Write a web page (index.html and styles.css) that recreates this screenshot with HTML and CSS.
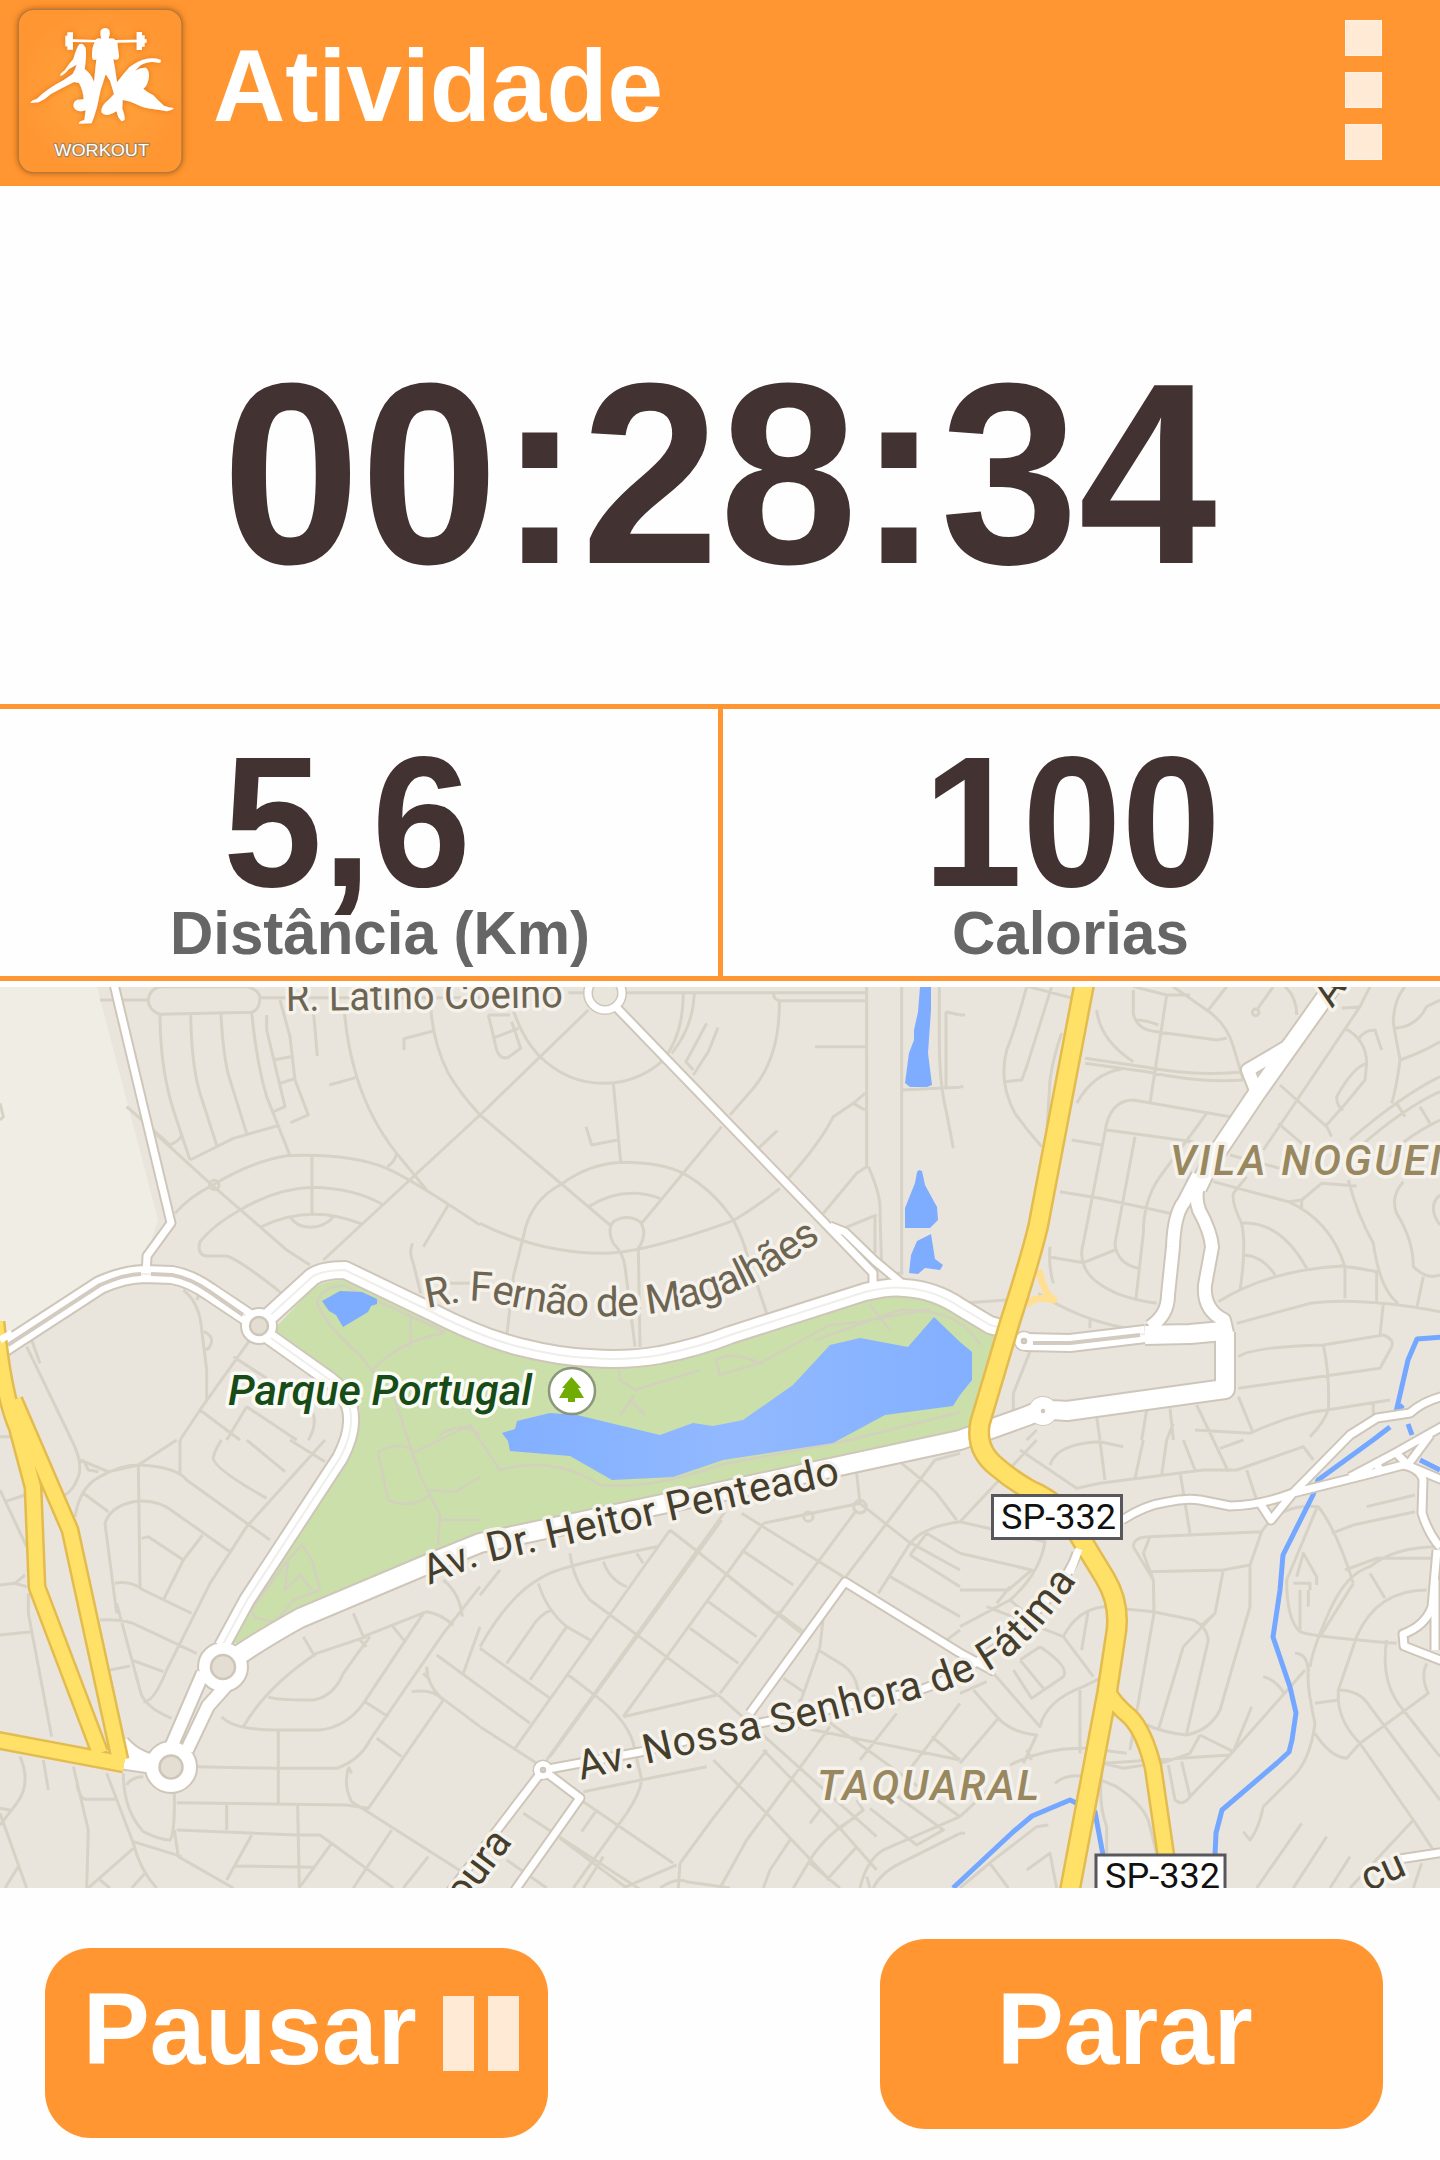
FILE: index.html
```html
<!DOCTYPE html>
<html lang="pt-BR">
<head>
<meta charset="utf-8">
<title>Atividade</title>
<link rel="stylesheet" href="styles.css">
</head>
<body>
<header class="topbar">
  <svg class="logo" viewBox="0 0 600 558" aria-label="Workout">
    <defs>
      <radialGradient id="glow"><stop offset="0" stop-color="#ffa63f"/><stop offset="1" stop-color="#ff9632"/></radialGradient>
      <filter id="soft" x="-20%" y="-20%" width="140%" height="140%"><feDropShadow dx="0" dy="0" stdDeviation="10" flood-color="#a84e00" flood-opacity=".75"/></filter>
      <filter id="halo" x="-20%" y="-20%" width="140%" height="140%"><feDropShadow dx="0" dy="0" stdDeviation="9" flood-color="#e06c00" flood-opacity=".8"/></filter>
    </defs>
    <rect x="55" y="28" width="491" height="490" rx="46" fill="url(#glow)" stroke="#b27a3d" stroke-width="4" filter="url(#soft)"/>
    <g fill="#fff" filter="url(#halo)">
      <path d="M196 107H202V97H219V118L286 120Q292 112 304 116Q299 100 303 90Q315 78 328 90Q332 102 326 116Q340 112 346 120L410 119V96H426V106H434V118H440V128H434V140H426V150H410V127L352 128L357 168Q358 182 340 178L345 205L351 247Q370 222 388 202Q412 182 440 176Q462 172 482 179Q485 190 474 188Q445 181 420 197L405 213Q420 202 438 203Q450 213 446 236Q441 260 430 266Q443 278 460 286Q474 302 492 317Q506 323 521 324Q520 330 500 334Q478 330 462 328Q430 325 409 313Q390 302 368 300L367 326Q375 346 374 360L365 364Q352 352 350 334L338 340Q315 351 304 337Q302 318 325 300Q337 288 342 282L330 242L317 223L302 270L291 322Q283 350 275 370L236 371Q237 364 253 360L257 331Q232 340 221 321Q218 305 232 299L251 298Q249 270 237 249L222 246Q182 266 153 282Q136 298 116 307L91 309Q94 300 110 297Q140 267 190 241L218 222Q226 208 230 194L207 207Q192 225 181 228Q178 222 195 210Q208 190 220 177Q230 142 238 133Q248 126 257 144Q260 170 254 207Q276 224 282 246Q286 207 289 178Q276 184 276 169Q275 143 284 127L219 126V149H202V139H196Z"/>
    </g>
    <text class="logo-text" x="163" y="469" textLength="284" lengthAdjust="spacingAndGlyphs">WORKOUT</text>
  </svg>
  <h1 class="title">Atividade</h1>
  <div class="menu"><i></i><i></i><i></i></div>
</header>

<main>
  <section class="timer"><span>00:28:34</span></section>

  <section class="stats">
    <div class="stat stat-distance"><strong>5,6</strong><span>Distância (Km)</span></div>
    <div class="stat stat-calories"><strong>100</strong><span>Calorias</span></div>
  </section>

  <svg class="map" viewBox="0 987 1440 901">
    <defs>
      <linearGradient id="lake" x1="0" x2="1"><stop offset="0" stop-color="#82afff"/><stop offset=".5" stop-color="#92b9ff"/><stop offset="1" stop-color="#82afff"/></linearGradient>
      <path id="fernao" d="M427 1308L466 1301Q482 1300 500 1304Q540 1313 580 1316Q630 1318 677 1310Q735 1296 775 1271L830 1234"/>
      <path id="heitor" d="M429 1585L480 1565Q495 1560 552 1548L675 1520L870 1477"/>
      <path id="nossa" d="M581 1780L650 1763L760 1738L920 1698Q970 1684 1000 1664Q1042 1636 1097 1550"/>

      <path id="w-thin" d="M113 980L171 1223L147 1256L146 1276M617 1008L873 1273V1292M830 1226L845 1232L875 1261L905 1286M1077 1553Q1065 1590 1000 1645Q950 1685 900 1695L750 1725L640 1752L543 1770L440 1905M543 1770L580 1798L508 1900M750 1713L845 1582L960 1653L995 1672"/>
      <path id="w-right" d="M1122 1520Q1145 1505 1167 1502Q1185 1498 1200 1500L1230 1506Q1262 1505 1293 1493L1373 1473L1403 1465Q1420 1468 1423 1480L1422 1513Q1428 1533 1440 1547M1293 1493L1350 1435L1377 1418L1410 1413Q1425 1400 1445 1396M1260 1503L1271 1520L1293 1493M1350 1477L1397 1452L1445 1425M1375 1460L1382 1474M1395 1452L1409 1466L1445 1481M1410 1462L1430 1435M1437 1550L1432 1607Q1425 1626 1403 1634L1404 1646L1445 1662M1393 1860L1445 1852M1435 1580V1650"/>
      <path id="w-dbl" d="M0 1350L100 1285Q125 1274 145 1274L172 1275Q190 1278 210 1292L255 1322M265 1320L312 1277Q322 1270 345 1270L430 1311Q480 1337 520 1347Q560 1357 590 1358Q625 1361 660 1355Q700 1347 730 1335L865 1292Q890 1286 905 1288Q935 1290 960 1307L990 1325L1012 1331M1025 1342L1070 1343L1145 1334"/>
      <path id="w-south" d="M268 1336L330 1380Q351 1397 351 1418Q352 1435 340 1458L247 1600L222 1646"/>
      <path id="w-wide" d="M223 1666Q255 1643 300 1618L433 1562L480 1543L700 1496L960 1440L1027 1416Q1042 1408 1067 1411L1225 1389V1332M1145 1335L1190 1334L1223 1331"/>
      <path id="w-mid" d="M1227 1333L1224 1320Q1203 1310 1205 1285L1212 1247Q1211 1232 1199 1210Q1194 1195 1199 1185M1150 1327Q1168 1315 1168 1295L1173 1247Q1174 1215 1184 1202L1198 1175M1257 1093L1248 1070L1287 1047L1310 1018M122 1742Q138 1762 171 1764M120 1762L160 1768M172 1745L203 1673M187 1750L208 1706L233 1678"/>
      <path id="w-up" d="M1198 1188L1210 1163L1257 1093L1323 1000L1340 975"/>
      <path id="y-main" d="M1085 980L1038 1227Q1030 1260 1010 1322L980 1423Q975 1450 997 1467Q1012 1480 1030 1490Q1065 1505 1080 1537L1105 1578Q1122 1606 1115 1640L1107 1693L1069 1895"/>
      <path id="y-side" d="M1107 1690Q1113 1703 1130 1717Q1144 1731 1153 1767L1166 1856M-4 1322Q3 1395 17 1427L33 1487L37 1587L100 1753M14 1400L70 1530L120 1760M-3 1740L124 1764"/>
    </defs>
    <rect class="land" y="987" width="1440" height="901"/>
    <path class="pale" d="M0 987H97L158 1220L148 1250L140 1266Q112 1270 95 1280L0 1340Z"/>

    <!-- local streets, one group per map tile -->
    <g class="street" transform="translate(0 980) scale(.33333)">
      <path d="M300 60H445M480 103Q445 90 445 60Q450 20 490 20H740Q780 30 780 55Q778 90 755 97ZM780 53H1440M480 103Q480 280 530 420L570 540M572 103Q575 260 600 340L650 495M663 103Q670 240 690 300L740 460M755 97Q770 250 800 350L870 527M800 105V150L855 380L820 395M840 60L870 170L885 300L925 405L872 428M820 240L872 230M840 310L885 295M940 90L952 228M1033 90Q1040 190 1070 290Q1110 420 1190 520L1280 630Q1240 610 1230 600M988 315L1070 292M1293 90Q1300 190 1345 280Q1380 340 1440 405L970 840M1212 210V176L1300 153M380 380L510 495Q545 480 545 460M460 455L630 610L860 810L930 855M570 540L700 475L830 438M1190 520Q1185 545 1162 560M525 700Q570 650 630 620Q750 545 860 527Q1050 520 1160 565Q1230 595 1440 735M720 690Q830 625 940 622Q1060 625 1145 672M936 527V705M785 740Q930 670 1085 732M870 710Q890 742 930 742Q975 742 1000 710M720 690Q640 735 600 785Q590 825 620 828H680Q720 840 845 940M1345 675L1270 800M1238 790Q1225 815 1240 850L1262 940M0 370L10 410L0 420M550 930Q600 970 605 1050L620 1170V1260M590 960L600 940M612 1055Q635 1065 635 1083Q632 1108 612 1110M750 1080L600 1290L540 1380M700 1130L800 1195M600 1290L720 1380M740 1280L680 1380M740 1280L890 1380M940 1300Q950 1340 925 1380M80 1100L215 1380M95 1080L120 1150M0 1370H30M1330 910H1440"/>
      <circle cx="643" cy="615" r="14"/>
    </g>
    <g class="street" transform="translate(480 980) scale(.33333)">
      <path d="M265 38H310M430 38H1160M880 38Q880 60 900 62H1155M25 105L50 210Q60 240 85 232L122 205L95 125M45 172L115 145M25 105H90M100 90Q125 170 175 225Q260 310 370 310Q470 310 545 245Q610 170 610 38M0 405L325 90M575 220Q640 140 643 38M680 130L618 245L640 270M714 143L685 215L640 285M898 62Q900 230 820 325L750 405M1005 200H1158M1160 20V560L1130 580L1030 700M1265 20V880M1378 20V200Q1380 320 1400 400L1420 505M1398 95V320M1398 95L1440 105M1265 330L1440 322M1155 340L1120 370L1060 410Q1020 490 925 595M1120 370L1155 390M835 505L892 452M400 310L422 545M318 440L335 495L412 480M725 440L485 730M540 655Q430 615 325 680M0 405L390 735M130 770Q150 660 245 612Q330 550 430 547Q540 547 610 580Q700 630 760 720Q790 780 800 820L860 1000M0 730Q180 820 370 820Q490 820 760 722Q830 680 900 625M130 770L100 890L80 1070M400 790Q380 750 400 725Q440 700 480 725Q505 760 475 805L480 1100M400 790Q430 820 435 860L465 1100M1165 560Q1205 650 1200 700L1205 860M1185 710V820M1090 745L1190 705M1175 825L1215 850M1245 880L1270 880"/>
    </g>
    <g class="street" transform="translate(960 980) scale(.33333)">
      <path d="M205 20L340 55M200 20Q165 150 140 210Q115 310 165 400Q200 450 245 500M275 20L200 260L185 300L135 305M305 160Q280 230 270 300L258 500M410 90Q420 180 520 245M375 235L560 262Q700 290 860 275M375 250L560 275Q720 310 850 300M520 30V100Q530 150 590 155L770 180L800 175M525 120Q560 120 595 135M640 20L740 90Q800 130 820 200L850 300M620 45L570 370M520 20L620 45L690 45M800 20L745 90M940 20L890 90M975 20Q1010 50 1010 105M350 370Q400 280 485 267M370 850Q360 820 370 790L440 430Q460 360 520 360L810 410M440 450L700 485M335 480L425 495M525 470L465 790Q470 850 535 865M740 400L600 590Q550 660 550 760L528 955M300 635L420 655L630 700M265 830L370 848L465 810M370 848Q380 900 470 940Q520 960 590 970M235 940Q360 1020 500 1045M390 1020V1045M270 800Q265 860 280 910M0 105H15M0 320H10M0 970L140 960M1145 85L1200 80L1230 20M1200 80L910 510M960 315L1100 440L1115 470M955 430L1060 520M1155 145Q1220 180 1220 250L1215 300Q1160 370 1095 440M1195 180Q1210 150 1245 150L1265 210M1220 250Q1180 260 1130 350Q1130 380 1150 390M1335 20Q1300 60 1300 130L1320 240Q1310 320 1295 370M1305 145Q1370 140 1400 80L1440 60M1320 240Q1390 215 1440 185M1440 290Q1320 350 1170 480M1440 335Q1330 385 1200 500M1440 420Q1320 480 1290 530M1380 380L1410 430M1310 370L1335 410M810 525L960 565M760 605Q870 635 985 665Q1110 720 1155 860V955M985 665L1025 660L1085 610L1190 618M1025 660V690M860 590L820 640Q815 670 845 730Q860 800 840 930M840 730Q960 720 1040 865M855 825Q910 830 945 885M775 965Q930 870 1145 858Q1250 870 1250 880V965M1165 600Q1190 700 1240 790Q1260 930 1315 970M1145 858L1255 875M1330 605Q1290 650 1310 700Q1360 780 1360 860Q1400 900 1440 885M1440 645Q1400 680 1440 735M1390 890L1370 985M830 1030L1050 970Q1200 950 1440 995M1270 970L1260 1065M835 1130Q880 1100 1090 1095L1270 1065Q1310 1080 1290 1110L1260 1165L835 1225M1090 1095Q1110 1190 1105 1290Q1090 1330 1050 1370M880 1360L835 1250M710 1275L760 1380M705 1350L870 1360Q1000 1300 1100 1290L1290 1260M1240 1265V1310M210 1115L160 1240V1300M560 1290L545 1380M630 1285L640 1380M410 1310L420 1380M640 1330L620 1380M230 1350L200 1380"/>
      <circle cx="887" cy="97" r="10"/>
    </g>
    <g class="street" transform="translate(0 1440) scale(.33333)">
      <path d="M0 150L80 320M15 185L75 165M0 435L45 430L80 440M45 430L75 405M85 460V520L155 890M0 585L95 575M215 0Q250 70 235 110Q220 150 195 165M240 60L325 95L415 75L530 0M250 60L265 90L295 95M540 0V105M225 230Q240 140 300 110Q360 75 415 75Q530 80 560 120L810 300M415 75L420 440M250 160L325 215M350 520L315 250Q330 200 400 185Q470 175 520 215L690 335M425 295L445 290L550 360L490 480M550 360L608 285M345 430Q390 420 430 450L575 520M300 540Q380 535 420 560L590 640M350 490L420 750Q430 800 515 835M330 690L390 678M395 660L490 695M975 0L740 260L630 430L500 690Q460 790 430 785M640 50Q650 20 665 0M640 50Q630 80 800 175M740 0L855 95M870 0L975 65M60 950Q95 1030 50 1090L0 1155M130 960L145 1050M0 1105L30 1110M0 1120L80 1344M220 980L265 1170L260 1344M230 1030Q240 1080 260 1078H345M320 1000L400 1210Q420 1290 470 1344M370 1000Q370 1110 430 1175Q480 1200 510 1200Q525 1180 523 1060M380 1035Q395 1010 430 1010M523 1170L535 1250L700 1344M400 1205L545 1250M400 1225L265 1344M435 1300L395 1344M300 1320L330 1344M55 1280L15 1344M590 980L830 985H1010Q1080 960 1110 900L1330 580L1440 440M530 1088L1040 1095L1105 1105L1330 780M530 1170L890 1185H960L1180 1344M835 870V1090M680 1090V1170M893 1095L898 1344M705 1278L940 1282M755 1185L680 1320M995 1210L900 1340M665 830Q700 870 835 870H960Q1040 860 1090 790L1270 520M730 860Q800 740 950 640L1100 590M805 770Q820 780 940 780Q1000 770 1030 700Q1080 630 1110 590M1060 520L1090 590L1280 515Q1320 520 1360 555M910 590L945 650M1330 420Q1380 460 1387 530M1175 555L1215 605M1080 600L1100 620M1440 560L1390 700M1310 645L1440 740M1280 680Q1280 730 1320 770L1440 860M1235 755Q1300 745 1330 780M1270 700L1290 720M1095 785L1165 830M1130 895L1205 950M1045 985Q1030 1040 1055 1085L1110 1120L1440 1330M1175 1170L1060 1344M1285 1250L1210 1344M1045 980L1055 1000"/>
    </g>
    <g class="street" transform="translate(480 1440) scale(.33333)">
      <path d="M0 465L60 390M0 620Q90 460 190 410Q230 380 530 320M270 340Q280 420 330 480L720 770L1190 1190M370 365Q390 420 440 440M470 340L490 370M175 430Q200 510 260 560L330 600M215 510Q180 520 150 570L80 670M260 560L150 720M570 270L105 925M735 215L200 960M725 240L210 950M570 270L965 580M785 220L1090 410M850 250L430 830M850 250L1140 190M785 330L940 435M735 400L885 520M685 485L830 590M630 565L775 670M1130 210L720 760M890 515L970 575M0 625L210 775M0 740L150 850M0 860L170 970M265 705L350 770Q440 840 460 910L485 1020M430 830L710 765M310 1055L680 980M485 1020Q480 1060 440 1120L280 1344M580 1270L310 1085M860 930L695 1140L600 1270M1050 860L800 1200L720 1344M700 960L870 1130L1040 1310M850 930L1080 1165L1190 1290M955 860L1440 960M910 715L970 755M1030 530L1020 620L960 790M1015 630L1080 670Q1130 700 1135 760M1130 100L1140 190L1285 305L1440 390M1090 420L1365 60L1440 40M1265 70Q1340 130 1370 160L1430 240M1195 460L1290 310Q1330 260 1440 245M1290 345L1440 440M1230 410L1440 530M1340 280L1440 340M1340 280L1290 345M1250 820L1140 960M1440 790L1280 1000M1355 890L1440 960M955 780L1440 1130M130 1120L590 1420M350 1110L305 1175M600 1270L595 1344M590 1275L430 1344M540 1344Q590 1310 620 1325L750 1344M370 1250L310 1344M1240 1060L1390 1170L1310 1215L1170 1105M1440 1130L1210 1230Q1160 1260 1140 1344M1440 1180L1260 1270Q1200 1300 1180 1344M930 1200L870 1290L850 1344M1130 1130Q1040 1180 990 1260L940 1344M990 1270L1080 1344M1130 1220L1040 1320M1020 1110L990 1150M1080 1165L1150 1110L1130 1080M1400 600L1440 570M1160 1310L1170 1344M80 1260L200 1344M240 1195L440 1344"/>
      <circle cx="1140" cy="200" r="19"/><circle cx="985" cy="230" r="14"/>
    </g>
    <g class="street" transform="translate(960 1440) scale(.33333)">
      <path d="M180 30L350 145L420 130L730 90H830L1030 20L1060 60M270 75Q290 10 420 5L490 20M420 5L435 120M550 0L525 115M620 0L605 105M660 95L690 280M670 0L705 90M760 0L805 95M860 90L890 180M780 25L850 0M230 0L0 245M0 245L255 305Q240 400 150 480L0 560M0 340L215 390L145 450L0 450M150 440L110 490M80 500L310 590L400 710M310 590Q350 510 430 500L580 515L700 540Q740 560 745 600L680 880M385 510L365 630M150 480L210 530M570 290L905 275Q960 190 1075 200Q1130 270 1180 430M570 290L550 340L580 420L582 520L510 930M520 320Q520 290 570 290M570 395L790 390L870 375M870 375L905 275M870 375V500L780 810Q750 870 680 885Q620 880 560 855M790 390L765 520L670 620L595 870M765 520L720 560M520 320L580 420M875 800L820 935L720 885M720 885L690 940L620 965M910 710Q950 720 975 765M1035 690L810 945L430 970L490 985L620 965M690 1070L810 945M690 1070Q670 1100 645 1080L625 975M665 965L690 1070M430 970Q410 1080 440 1160V1240M285 1030Q340 980 470 1040Q560 1100 570 1160L590 1240M240 620Q330 680 310 710L215 775L160 690M180 660L250 745M240 620L180 660M100 700L240 860Q260 780 370 740L420 715M0 760L80 725M40 750L115 835L0 970M115 835Q160 880 230 885L190 970M360 750V940M150 975Q260 920 380 925L500 940M200 930L215 960M0 1130L150 990M0 1180H15M0 1344L100 1260L230 1160L265 1155M90 1270L145 1344M200 1290L270 1240L290 1344M980 420Q980 540 1020 575Q1050 590 1310 610M1070 205L980 420M1080 590L1180 430M1050 680Q1060 620 1110 510Q1160 400 1230 380Q1300 320 1440 320M1155 390L1250 355L1440 355M1135 750L1190 590Q1250 450 1400 450M1230 400L1275 475M1115 280L1180 255L1365 215M1220 200L1365 165M1010 410L1030 340L1070 410V435M1000 430H1050V450M1020 450V570M1045 450V500M1005 640Q1040 640 1045 690Q1040 740 1065 850Q1050 960 1000 1010L910 1100Q895 1170 870 1200L850 1175M1065 790L1135 780V750Q1200 750 1230 800L1440 1080M1135 780Q1140 850 1200 910L1360 1140L1420 1230M1280 600Q1260 730 1330 810L1440 950M1400 670Q1380 710 1405 760L1200 910L1160 955Q1110 950 1065 880M1360 1140L1170 1344M1025 1150L890 1344M1100 1190L1000 1344M1170 1250L1110 1344M1385 1270L1360 1344"/>
    </g>

    <path class="park" d="M277 1326L312 1289Q325 1280 345 1280L480 1345Q550 1364 620 1362Q700 1350 750 1330L870 1296L905 1293L940 1303L1008 1338L975 1430L700 1492L480 1538L300 1610L247 1645L229 1642L352 1450L360 1410L345 1385L277 1335Z"/>
    <g class="trail">
      <path d="M317 1303Q323 1285 345 1286L445 1332M317 1303Q325 1325 360 1355L395 1400L420 1475L440 1515L438 1545M372 1371Q400 1340 445 1333M411 1315L410 1348M480 1435Q460 1420 440 1435M378 1452Q400 1440 415 1452L470 1425L500 1470Q555 1455 600 1485Q650 1490 720 1465L850 1440L960 1412M378 1452L388 1500Q410 1510 430 1495M430 1490L455 1492L480 1477M438 1520H480M619 1370L620 1380L635 1390L700 1370M635 1395L620 1415M630 1400L645 1415M716 1360Q730 1350 760 1363L720 1375ZM760 1363L830 1325L860 1322L930 1309M815 1340L900 1310Q960 1308 980 1345M870 1305L890 1330M251 1610L288 1560L302 1545L312 1560L320 1590L294 1600L275 1622L255 1618ZM288 1560L285 1590L300 1575L312 1590"/>
    </g>
    <path class="water" fill="url(#lake)" d="M502 1433L515 1429L517 1421L550 1413L577 1415L660 1435L693 1423L713 1426L743 1420L793 1385L830 1345L860 1338L908 1347L934 1317L960 1342L972 1352V1380L960 1395L953 1406L885 1415L833 1443L723 1460L673 1477L612 1480L570 1456L510 1451L508 1441Z"/>
    <path class="pond" d="M322 1301L340 1291L362 1292L377 1299V1304L371 1306L368 1312L343 1327L336 1315L329 1311ZM920 987H931V1010L928 1053L932 1085L927 1087H910L905 1083L909 1053L914 1040V1030L918 1012ZM917 1172L919 1170L922 1171L925 1185L937 1207L938 1220L930 1228H905V1208L915 1183ZM931 1234L935 1259L943 1265L940 1270L925 1268L918 1274L909 1273L911 1255L917 1241Z"/>
    <path class="river" d="M1443 1337L1417 1339L1408 1360L1396 1412L1403 1405M1390 1427L1373 1440L1318 1480L1313 1495L1283 1555L1280 1590L1273 1637L1290 1687L1296 1713L1292 1740L1289 1752L1277 1763L1222 1810L1216 1833L1215 1855M953 1888L1013 1832L1032 1816L1070 1800L1095 1812L1103 1855M1408 1424L1412 1435M1420 1460L1440 1470"/>

    <g class="case">
      <use href="#w-thin" stroke-width="11"/><use href="#w-right" stroke-width="11"/><use href="#w-dbl" stroke-width="20"/><use href="#w-south" stroke-width="18"/><use href="#w-wide" stroke-width="22"/><use href="#w-mid" stroke-width="16"/><use href="#w-up" stroke-width="20"/>
      <circle cx="605" cy="993" r="17" stroke-width="10"/><circle cx="259" cy="1326" r="13" stroke-width="12"/><circle cx="171" cy="1767" r="18" stroke-width="18"/><circle cx="223" cy="1667" r="18" stroke-width="16"/><circle cx="1043" cy="1411" r="9" stroke-width="12"/><circle cx="1024" cy="1341" r="6" stroke-width="9"/><circle cx="543" cy="1770" r="6" stroke-width="9"/>
    </g>
    <g class="road">
      <use href="#w-thin" stroke-width="7"/><use href="#w-right" stroke-width="7"/><use href="#w-dbl" stroke-width="16"/><use href="#w-south" stroke-width="14"/>
      <use class="median" href="#w-dbl" stroke-width="2"/><use class="median" href="#w-south" stroke-width="2"/>
      <path class="median dark" stroke-width="4" d="M8 1345L100 1285Q125 1274 141 1274M151 1274L172 1275Q190 1278 210 1292L243 1315M1033 1343L1070 1343L1140 1335"/>
      <use href="#w-wide" stroke-width="18"/><use href="#w-mid" stroke-width="12"/><use href="#w-up" stroke-width="16"/>
      <circle cx="605" cy="993" r="17" stroke-width="7"/><circle cx="259" cy="1326" r="13" stroke-width="8"/><circle cx="171" cy="1767" r="18" stroke-width="14"/><circle cx="223" cy="1667" r="18" stroke-width="12"/><circle cx="1043" cy="1411" r="8" stroke-width="12"/><circle cx="1024" cy="1341" r="6" stroke-width="6"/><circle cx="543" cy="1770" r="6" stroke-width="6"/>
    </g>
    <g class="island"><circle cx="259" cy="1326" r="9"/><circle cx="171" cy="1767" r="11.5"/><circle cx="223" cy="1667" r="12"/><circle cx="1043" cy="1411" r="1"/><circle cx="1024" cy="1341" r="2"/><circle cx="543" cy="1770" r="2"/></g>
    <path class="ramp" d="M1039 1270Q1043 1292 1054 1300Q1035 1295 1027 1305"/>
    <g class="hwy-case"><use href="#y-main" stroke-width="22"/><use href="#y-side" stroke-width="19"/></g>
    <g class="hwy"><use href="#y-main" stroke-width="17"/><use href="#y-side" stroke-width="14"/></g>
    <path class="road" stroke-width="7" d="M0 1340L12 1333M1079 1549L1070 1573"/>

    <g class="label street-name">
      <text x="286" y="1011" font-size="40" textLength="277" lengthAdjust="spacingAndGlyphs" transform="rotate(-.8 288 1010)">R. Latino Coelho</text>
      <text font-size="41" letter-spacing="-1.2"><textPath href="#fernao">R. Fernão de Magalhães</textPath></text>
    </g>
    <g class="label avenue-name">
      <text font-size="41" letter-spacing=".25"><textPath href="#heitor">Av. Dr. Heitor Penteado</textPath></text>
      <text font-size="41" letter-spacing=".65"><textPath href="#nossa">Av. Nossa Senhora de Fátima</textPath></text>
      <text font-size="41" text-anchor="end" transform="translate(513 1842) rotate(-53)">oura</text>
      <text font-size="41" transform="translate(1368 1892) rotate(-24)">çu</text>
      <text font-size="41" transform="translate(1332 1009) rotate(-55)">A</text>
    </g>
    <g class="label district">
      <text x="1170" y="1175" font-size="42" textLength="271">VILA NOGUEI</text>
      <text x="817" y="1800" font-size="42" textLength="222">TAQUARAL</text>
    </g>
    <text class="label park-name" x="228" y="1405" font-size="42" textLength="304" lengthAdjust="spacingAndGlyphs">Parque Portugal</text>
    <g class="pin">
      <circle cx="572" cy="1391" r="23"/>
      <path d="M571.500 1377L581 1388H578L584 1398H575V1402H568V1398H559L565 1388H562Z"/>
    </g>
    <g class="shield">
      <rect x="992.500" y="1495.500" width="129" height="43"/><text x="1001" y="1529" textLength="115" lengthAdjust="spacingAndGlyphs">SP-332</text>
      <rect x="1096" y="1855" width="129" height="43"/><text x="1105" y="1888" textLength="115" lengthAdjust="spacingAndGlyphs">SP-332</text>
    </g>
  </svg>
</main>

<footer class="actions">
  <button class="btn btn-pause"><span>Pausar</span><i></i><i></i></button>
  <button class="btn btn-stop"><span>Parar</span></button>
</footer>
</body>
</html>
```
FILE: styles.css
```css
* { box-sizing: border-box; }

body {
  margin: 0;
  width: 1440px;
  height: 2160px;
  overflow: hidden;
  background: #fefefe;
  font-family: "Liberation Sans", Arial, sans-serif;
  font-weight: bold;
}

.topbar {
  display: flex;
  align-items: flex-start;
  height: 186px;
  background: #ff9631;
  color: #fff;
}

.logo { flex: none; width: 200px; height: 186px; }

.logo-text {
  font: 52px "Liberation Sans", Arial, sans-serif;
  fill: #fff;
  stroke: #a8845a;
  stroke-width: 7px;
  stroke-linejoin: round;
  paint-order: stroke;
}

.title,
.btn span {
  font-size: 100px;
  line-height: 1;
  font-weight: bold;
  transform: scaleY(1.02);
  transform-origin: 0 .8465em;
}

.title { margin: 36px 0 0 13px; }

.menu {
  display: flex;
  flex-direction: column;
  gap: 16px;
  margin: 20px 58px 0 auto;
}

.menu i {
  width: 37px;
  height: 36px;
  background: #ffead6;
  border: 1px solid #fff2e6;
}

.timer {
  height: 518px;
  padding: 167px 0 0 222px;
  color: #433232;
  font-size: 248.500px;
  line-height: 1;
}

.timer span,
.stat strong {
  display: block;
  transform: scaleY(1.04);
  transform-origin: 0 .8465em;
}

.stats {
  display: grid;
  grid-template-columns: 723px 1fr;
  height: 277px;
  border: solid #ff9631;
  border-width: 5px 0;
}

.stat { padding-top: 26px; }
.stat-distance { border-right: 5px solid #ff9631; }

.stat strong {
  color: #433232;
  font-size: 178.500px;
  line-height: 1;
}

.stat span {
  display: block;
  position: relative;
  z-index: 1;
  margin-top: -9.500px;
  color: #666;
  font-size: 60px;
  line-height: 1;
  transform: scaleY(1.02);
  transform-origin: 0 .8465em;
}

.stat-distance strong { padding-left: 223px; }
.stat-distance span { padding-left: 170px; }
.stat-calories strong { padding-left: 200px; }
.stat-calories span { padding-left: 229px; }

.map {
  display: block;
  width: 1440px;
  height: 901px;
  margin-top: 6px;
  font-family: Roboto, "Noto Sans", sans-serif;
}

.land { fill: #e9e5dd; }
.pale { fill: #f0ede5; }
.street { fill: none; stroke: #d7d2c6; stroke-width: 9px; stroke-linejoin: round; }
.park { fill: #cadfaa; }
.trail { fill: none; stroke: #d3d1bd; stroke-width: 2.500px; }
.pond { fill: #7eacff; }
.river { fill: none; stroke: #74a7ff; stroke-width: 5px; stroke-linejoin: round; }
.case { fill: none; stroke: #cec6b9; stroke-linejoin: round; }
.road { fill: none; stroke: #fff; stroke-linejoin: round; }
.median { stroke: #f0eeea; }
.median.dark { stroke: #d3cbbf; }
.island { fill: #e3ddd2; stroke: #cec6b9; stroke-width: 2.500px; }
.ramp { fill: none; stroke: #ffdf92; stroke-width: 7px; stroke-linejoin: round; }
.hwy-case { fill: none; stroke: #e3bb4e; stroke-linejoin: round; }
.hwy { fill: none; stroke: #ffe168; stroke-linejoin: round; }

.label {
  font-weight: 400;
  stroke: #f5f2ec;
  stroke-width: 7px;
  stroke-linejoin: round;
  paint-order: stroke;
}

.street-name { fill: #6d6552; }
.avenue-name { fill: #453e2d; }
.district { fill: #99885f; font-style: italic; font-weight: 500; }
.park-name { fill: #174b18; font-style: italic; font-weight: 500; stroke: #fafbf4; }

.pin circle { fill: #fff; stroke: #8b967b; stroke-width: 2.500px; }
.pin path { fill: #70ad00; }
.shield rect { fill: #fff; stroke: #58585c; stroke-width: 3px; }
.shield text { fill: #111; font-size: 35px; font-weight: 400; }

.actions {
  display: flex;
  justify-content: space-between;
  align-items: flex-start;
  padding: 51px 57px 0 45px;
}

.btn {
  display: flex;
  align-items: flex-start;
  width: 503px;
  height: 190px;
  padding: 0;
  border: 0;
  border-radius: 46px;
  background: #ff9631;
  color: #fff;
  font-family: inherit;
}

.btn-pause { margin-top: 9px; padding: 31px 0 0 38px; }
.btn-stop { padding: 40px 0 0 117px; }
.btn-pause span { margin-right: 26px; }

.btn i {
  width: 31px;
  height: 75px;
  margin: 17px 14px 0 0;
  background: #ffead6;
}
```
